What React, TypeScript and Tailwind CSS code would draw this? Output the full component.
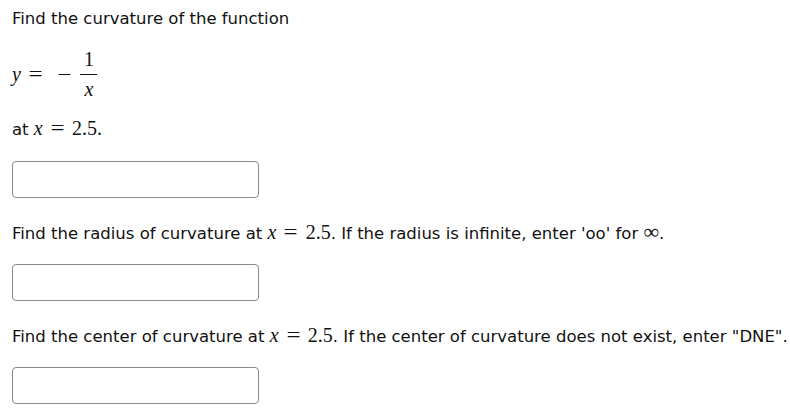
const mathFont = "[font-family:'Liberation_Serif',serif]"

const MathAt = ({ value }: { value: string }) => (
  <span className={`${mathFont} text-[20px] leading-[20px]`}>
    <span className="italic">x</span>
    <span className="inline-block mx-[9px] scale-x-125">=</span>
    {value}
  </span>
)

const AnswerBox = () => (
  <input
    type="text"
    className="block w-[247px] h-[37px] border border-[#8a8a8a] rounded-[4px] bg-white outline-none"
  />
)

const App = () => {
  return (
    <div className="w-[790px] h-[413px] bg-white text-[#111] [font-family:'DejaVu_Sans',sans-serif] text-[16.5px] px-[12px] overflow-hidden">
      <p className="pt-[9px] h-[29px] leading-[20px]">Find the curvature of the function</p>

      {/* formula */}
      <div className={`${mathFont} text-[20px] flex items-center mt-[21px] h-[48px]`}>
        <span className="italic leading-[18px]">y</span>
        <span className="ml-[9px] leading-[18px] scale-x-125">=</span>
        <span className="ml-[18px] leading-[18px] scale-x-125">−</span>
        <span className="ml-[10px] inline-flex flex-col items-center w-[17px]">
          <span className="leading-[18px] pb-[6px]">1</span>
          <span className="block w-full h-px bg-[#111]" />
          <span className="italic leading-[18px] pt-[5px]">x</span>
        </span>
      </div>

      <p className="mt-[20px] h-[20px] leading-[20px] whitespace-nowrap">
        at <MathAt value="2.5." />
      </p>

      <div className="mt-[23px]">
        <AnswerBox />
      </div>

      <p className="mt-[24px] h-[20px] leading-[20px] whitespace-nowrap">
        Find the radius of curvature at <MathAt value="2.5" />. If the radius is infinite, enter 'oo' for{" "}
        <span className={`${mathFont} text-[22px] leading-[20px]`}>∞</span>.
      </p>

      <div className="mt-[22px]">
        <AnswerBox />
      </div>

      <p className="mt-[24px] h-[20px] leading-[20px] whitespace-nowrap">
        Find the center of curvature at <MathAt value="2.5" />. If the center of curvature does not exist, enter "DNE".
      </p>

      <div className="mt-[22px]">
        <AnswerBox />
      </div>
    </div>
  )
}

export default App
